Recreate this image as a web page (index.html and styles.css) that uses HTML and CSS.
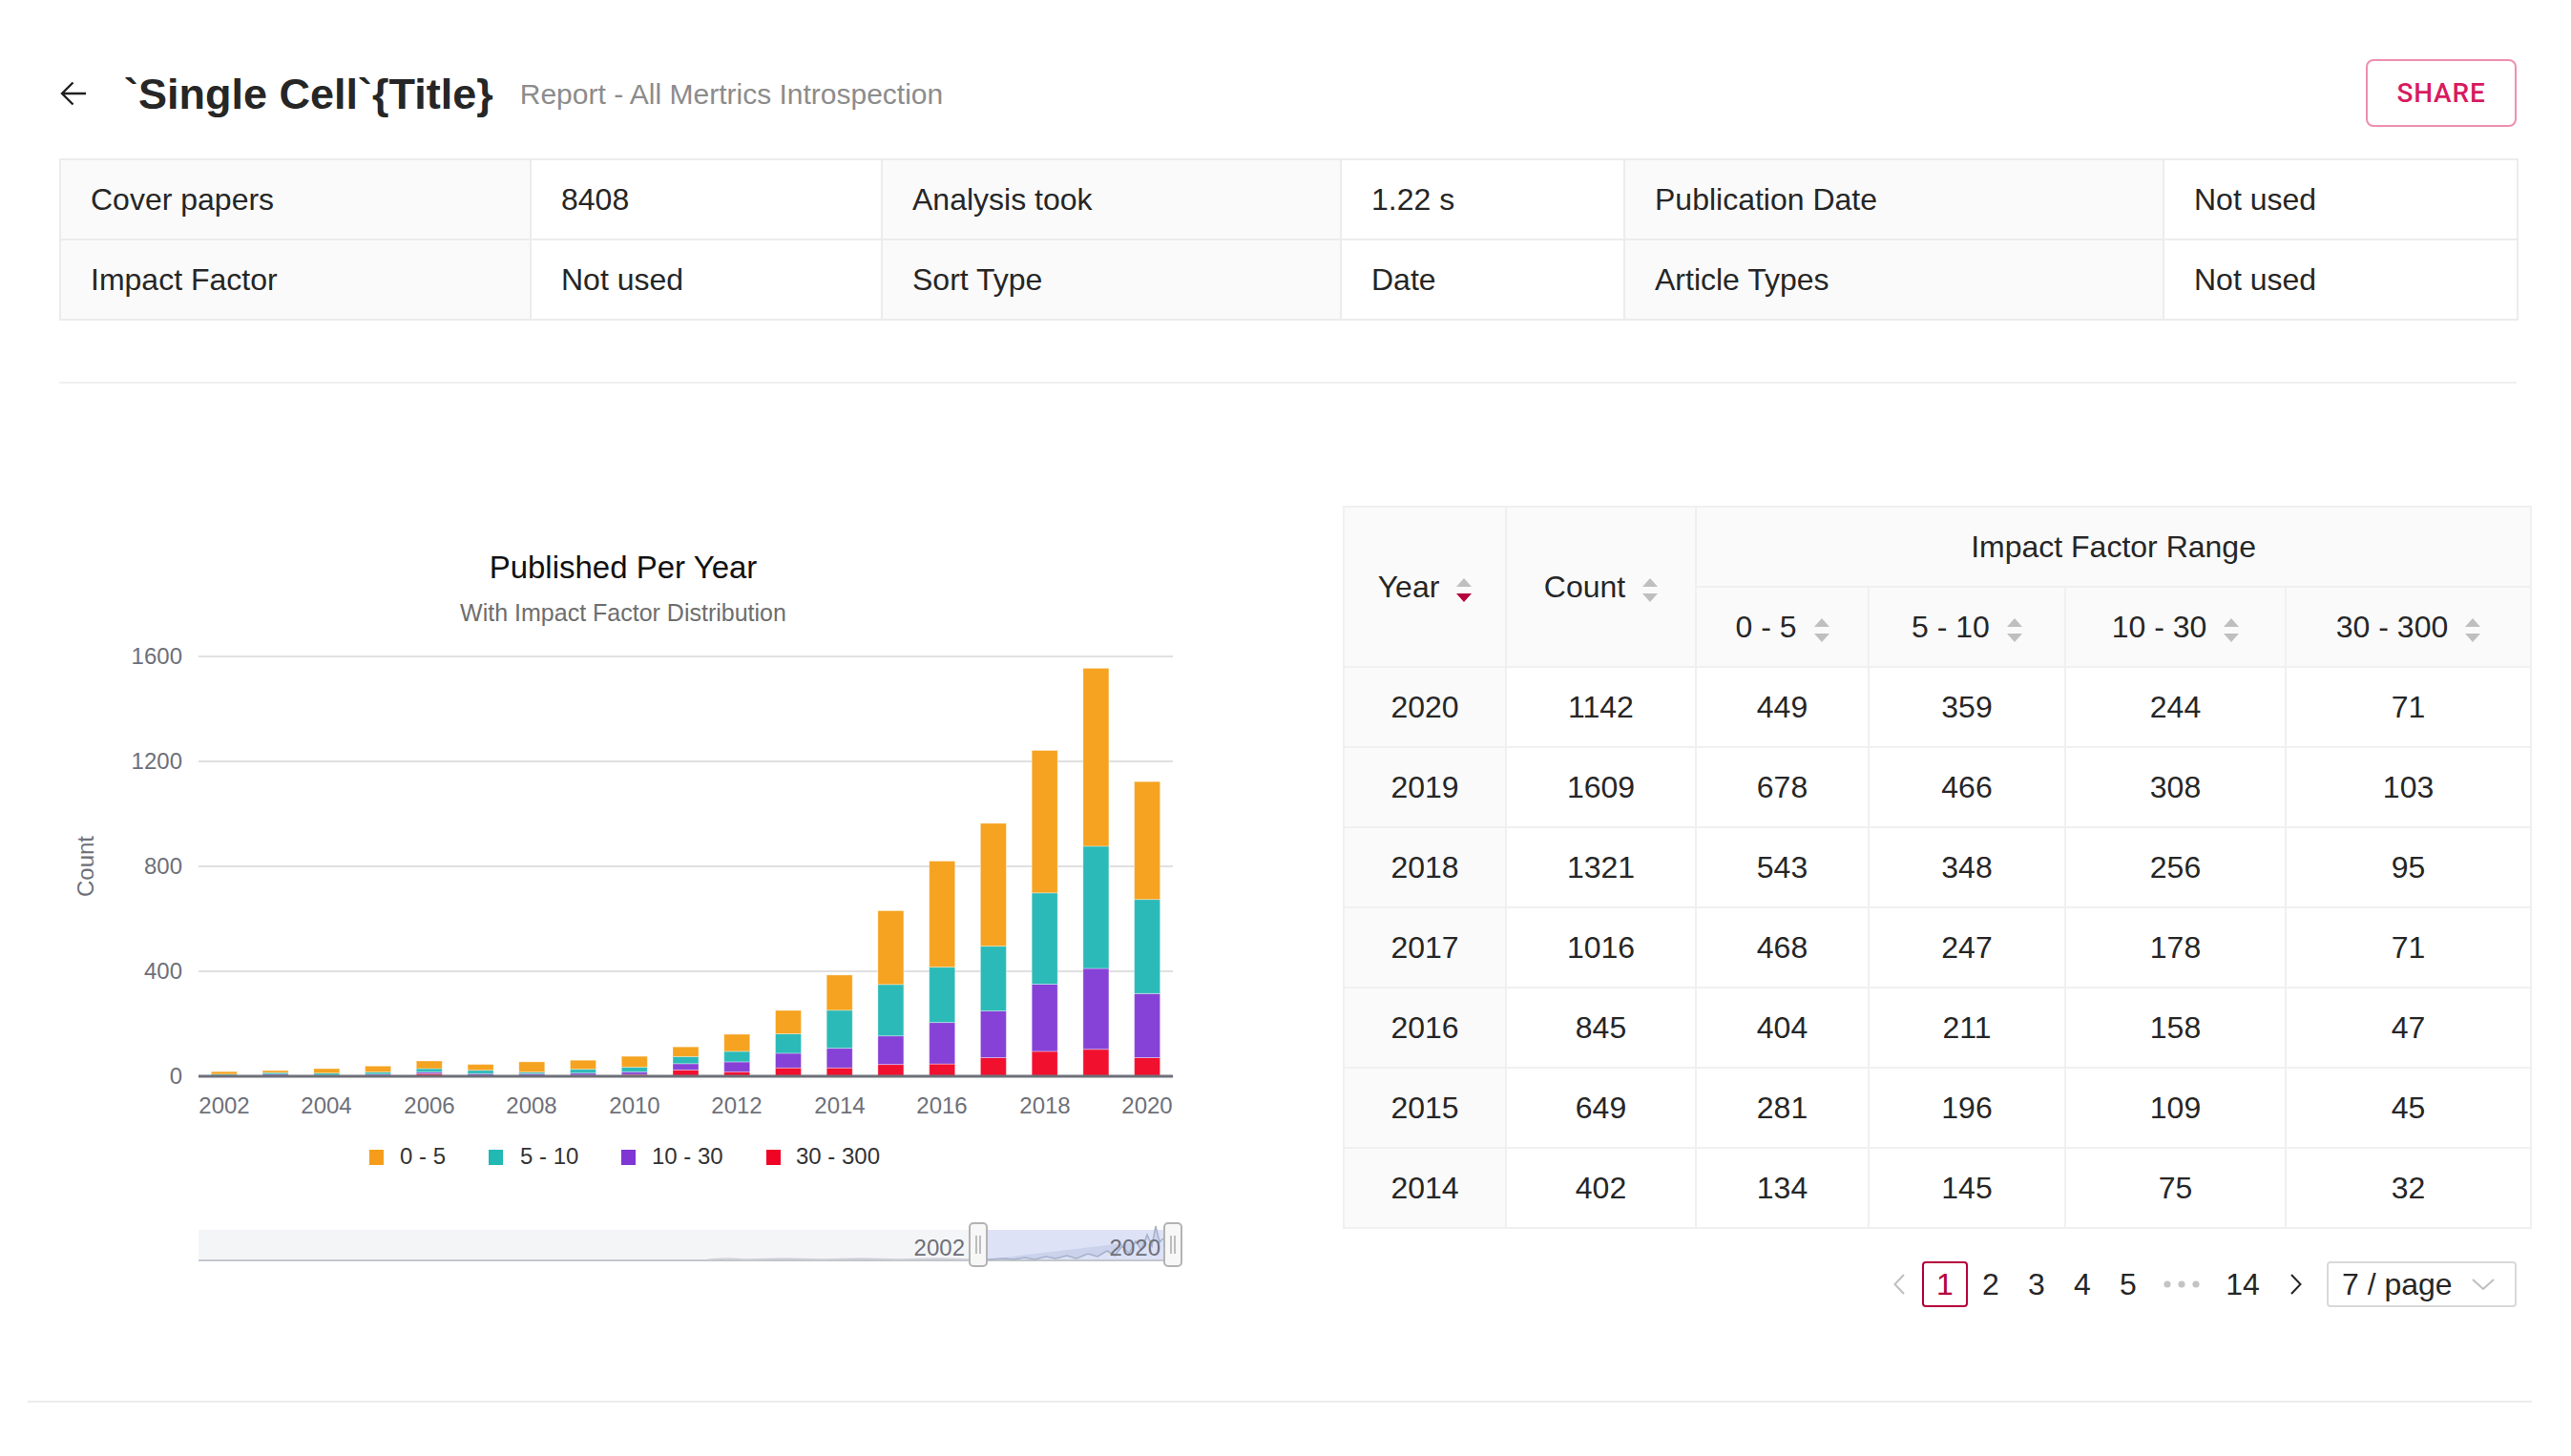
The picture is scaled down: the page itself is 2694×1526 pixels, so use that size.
FILE: index.html
```html
<!DOCTYPE html>
<html lang="en">
<head>
<meta charset="utf-8">
<title>Single Cell Report</title>
<link rel="stylesheet" href="styles.css">
</head>
<body>
<div class="page">
  <div class="top">
    <header class="header">
      <svg class="back" viewBox="0 0 28 26"><path d="M27 13H2M13.5 1.5L2 13L13.5 24.5" fill="none" stroke="#1f1f1f" stroke-width="2.4"/></svg>
      <h1 class="title">`Single Cell`{Title}</h1>
      <span class="subtitle">Report - All Mertrics Introspection</span>
      <button class="share">SHARE</button>
    </header>
    <table class="summary">
      <colgroup><col class="s1"><col class="s2"><col class="s3"><col class="s4"><col class="s5"><col class="s6"></colgroup>
      <tr><td class="lbl">Cover papers</td><td>8408</td><td class="lbl">Analysis took</td><td>1.22 s</td><td class="lbl">Publication Date</td><td>Not used</td></tr>
      <tr><td class="lbl">Impact Factor</td><td>Not used</td><td class="lbl">Sort Type</td><td>Date</td><td class="lbl">Article Types</td><td>Not used</td></tr>
    </table>
    <div class="divider"></div>
  </div>

  <div class="content">
    <div class="chart">
      <svg class="chart-svg" width="1300" height="810" viewBox="0 0 1300 810">
        <text class="c-title" x="591" y="76" text-anchor="middle">Published Per Year</text>
        <text class="c-sub" x="591" y="121" text-anchor="middle">With Impact Factor Distribution</text>
        <g class="grid">
          <line x1="146" y1="158" x2="1167" y2="158"/>
          <line x1="146" y1="268" x2="1167" y2="268"/>
          <line x1="146" y1="378" x2="1167" y2="378"/>
          <line x1="146" y1="488" x2="1167" y2="488"/>
        </g>
        <g class="ax">
          <text x="129" y="166" text-anchor="end">1600</text>
          <text x="129" y="276" text-anchor="end">1200</text>
          <text x="129" y="386" text-anchor="end">800</text>
          <text x="129" y="496" text-anchor="end">400</text>
          <text x="129" y="606" text-anchor="end">0</text>
        </g>
        <text class="ax" transform="translate(36,378) rotate(-90)" text-anchor="middle">Count</text>
        <g id="bars"></g>
        <line class="axis" x1="146" y1="598" x2="1167" y2="598"/>
        <g class="ax">
          <text x="173" y="637" text-anchor="middle">2002</text>
          <text x="280" y="637" text-anchor="middle">2004</text>
          <text x="388" y="637" text-anchor="middle">2006</text>
          <text x="495" y="637" text-anchor="middle">2008</text>
          <text x="603" y="637" text-anchor="middle">2010</text>
          <text x="710" y="637" text-anchor="middle">2012</text>
          <text x="818" y="637" text-anchor="middle">2014</text>
          <text x="925" y="637" text-anchor="middle">2016</text>
          <text x="1033" y="637" text-anchor="middle">2018</text>
          <text x="1140" y="637" text-anchor="middle">2020</text>
        </g>
        <g class="legend">
          <rect x="325" y="675" width="15" height="16" fill="#f59d1a"/>
          <text x="357" y="690">0 - 5</text>
          <rect x="450" y="675" width="15" height="16" fill="#22b8b4"/>
          <text x="483" y="690">5 - 10</text>
          <rect x="589" y="675" width="15" height="16" fill="#7f36d4"/>
          <text x="621" y="690">10 - 30</text>
          <rect x="741" y="675" width="15" height="16" fill="#ef0425"/>
          <text x="772" y="690">30 - 300</text>
        </g>
        <g class="zoom">
          <rect x="146" y="759" width="1011" height="33" fill="#f4f5f7"/>
          <rect x="973" y="759" width="184" height="33" fill="#dde2f7"/>
          <line x1="146" y1="791" x2="1157" y2="791" stroke="#c3c6cc" stroke-width="2"/>
          <polyline points="680,790 700,789 720,790 760,789 800,790 840,789 880,790 920,789 960,790" fill="none" stroke="#cfd2d8" stroke-width="1.5"/>
          <polyline points="973,790 990,789 1000,790 1012,788 1022,790 1034,787 1044,789 1056,786 1066,789 1078,784 1088,787 1098,781 1106,786 1114,776 1121,784 1128,771 1134,780 1140,764 1145,776 1149,755 1153,772 1157,768" fill="rgba(150,165,200,0.25)" stroke="#a7b2ca" stroke-width="1.5"/>
          <rect class="handle" x="954" y="752" width="18" height="45" rx="4"/>
          <line class="grip" x1="961" y1="765" x2="961" y2="784"/>
          <line class="grip" x1="965" y1="765" x2="965" y2="784"/>
          <rect class="handle" x="1158" y="752" width="18" height="45" rx="4"/>
          <line class="grip" x1="1165" y1="765" x2="1165" y2="784"/>
          <line class="grip" x1="1169" y1="765" x2="1169" y2="784"/>
          <text class="ax" x="949" y="786" text-anchor="end">2002</text>
          <text class="ax" x="1154" y="786" text-anchor="end">2020</text>
        </g>
      </svg>
    </div>

    <div class="right">
      <table class="data">
        <colgroup><col class="d1"><col class="d2"><col class="d3"><col class="d4"><col class="d5"><col class="d6"></colgroup>
        <thead>
          <tr>
            <th rowspan="2"><span class="th-in">Year<svg class="sorter" viewBox="0 0 16 25"><path class="up" d="M0 9L8 0L16 9Z"/><path class="dn on" d="M0 16H16L8 25Z"/></svg></span></th>
            <th rowspan="2"><span class="th-in">Count<svg class="sorter" viewBox="0 0 16 25"><path class="up" d="M0 9L8 0L16 9Z"/><path class="dn" d="M0 16H16L8 25Z"/></svg></span></th>
            <th colspan="4">Impact Factor Range</th>
          </tr>
          <tr>
            <th><span class="th-in">0 - 5<svg class="sorter" viewBox="0 0 16 25"><path class="up" d="M0 9L8 0L16 9Z"/><path class="dn" d="M0 16H16L8 25Z"/></svg></span></th>
            <th><span class="th-in">5 - 10<svg class="sorter" viewBox="0 0 16 25"><path class="up" d="M0 9L8 0L16 9Z"/><path class="dn" d="M0 16H16L8 25Z"/></svg></span></th>
            <th><span class="th-in">10 - 30<svg class="sorter" viewBox="0 0 16 25"><path class="up" d="M0 9L8 0L16 9Z"/><path class="dn" d="M0 16H16L8 25Z"/></svg></span></th>
            <th><span class="th-in">30 - 300<svg class="sorter" viewBox="0 0 16 25"><path class="up" d="M0 9L8 0L16 9Z"/><path class="dn" d="M0 16H16L8 25Z"/></svg></span></th>
          </tr>
        </thead>
        <tbody>
          <tr><td class="yr">2020</td><td>1142</td><td>449</td><td>359</td><td>244</td><td>71</td></tr>
          <tr><td class="yr">2019</td><td>1609</td><td>678</td><td>466</td><td>308</td><td>103</td></tr>
          <tr><td class="yr">2018</td><td>1321</td><td>543</td><td>348</td><td>256</td><td>95</td></tr>
          <tr><td class="yr">2017</td><td>1016</td><td>468</td><td>247</td><td>178</td><td>71</td></tr>
          <tr><td class="yr">2016</td><td>845</td><td>404</td><td>211</td><td>158</td><td>47</td></tr>
          <tr><td class="yr">2015</td><td>649</td><td>281</td><td>196</td><td>109</td><td>45</td></tr>
          <tr><td class="yr">2014</td><td>402</td><td>134</td><td>145</td><td>75</td><td>32</td></tr>
        </tbody>
      </table>
      <div class="pager">
        <span class="pg"><svg class="chev" viewBox="0 0 12 22"><path d="M11 1L1.5 11L11 21" fill="none" stroke="#bfbfbf" stroke-width="2"/></svg></span>
        <span class="pg active">1</span>
        <span class="pg">2</span>
        <span class="pg">3</span>
        <span class="pg">4</span>
        <span class="pg">5</span>
        <span class="pg ell"><svg class="dots" viewBox="0 0 38 8"><circle cx="4" cy="4" r="3.6"/><circle cx="19" cy="4" r="3.6"/><circle cx="34" cy="4" r="3.6"/></svg></span>
        <span class="pg wide">14</span>
        <span class="pg"><svg class="chev" viewBox="0 0 12 22"><path d="M1 1L10.5 11L1 21" fill="none" stroke="#262626" stroke-width="2"/></svg></span>
        <div class="select"><span>7 / page</span><svg class="down" viewBox="0 0 24 12"><path d="M1 1L12 11L23 1" fill="none" stroke="#bfbfbf" stroke-width="2"/></svg></div>
      </div>
    </div>
  </div>

  <div class="bottom-rule"></div>
</div>
<script src="script.js"></script>
</body>
</html>
```

FILE: styles.css
```css
html, body {
  margin: 0;
  padding: 0;
  background: #ffffff;
}
body {
  font-family: "Liberation Sans", Arial, Helvetica, sans-serif;
  color: #262626;
}
.page {
  width: 2694px;
}
.top {
  margin-left: 62px;
  width: 2575px;
}
.header {
  display: flex;
  align-items: center;
  height: 71px;
  margin-top: 62px;
}
.back {
  width: 28px;
  height: 26px;
  margin-left: 1px;
  flex: none;
}
.title {
  margin: 0 0 0 39px;
  font-size: 45px;
  font-weight: 700;
  color: #262626;
  line-height: 1.2;
  padding-top: 2px;
}
.subtitle {
  margin-left: 28px;
  font-size: 30px;
  color: #8c8c8c;
  line-height: 1.2;
  padding-top: 2px;
}
.share {
  margin-left: auto;
  width: 158px;
  height: 71px;
  border: 2px solid #ee8fb1;
  border-radius: 8px;
  background: #ffffff;
  color: #d81b60;
  font-family: Roboto, "Liberation Sans", sans-serif;
  font-weight: 500;
  font-size: 28px;
  letter-spacing: 0.8px;
  padding: 0;
}

.summary {
  margin-top: 33px;
  width: 2575px;
  table-layout: fixed;
  border-collapse: separate;
  border-spacing: 0;
  border-top: 2px solid #ececec;
  border-left: 2px solid #ececec;
}
.summary tr { height: 84px; }
.summary td {
  border-right: 2px solid #ececec;
  border-bottom: 2px solid #ececec;
  padding: 0 0 0 31px;
  font-size: 32px;
  color: #262626;
  background: #ffffff;
}
.summary td.lbl { background: #fafafa; }
.s1 { width: 493px; }
.s2 { width: 368px; }
.s3 { width: 481px; }
.s4 { width: 297px; }
.s5 { width: 565px; }
.s6 { width: 371px; }

.divider {
  margin-top: 64px;
  height: 2px;
  background: #f0f0f0;
}

.content {
  display: flex;
  align-items: flex-start;
  margin-top: 128px;
  margin-left: 62px;
}
.chart {
  width: 1300px;
  height: 810px;
  flex: none;
}
.chart-svg { display: block; }
.c-title {
  font-family: "Liberation Sans", Arial, sans-serif;
  font-size: 33px;
  fill: #111111;
}
.c-sub {
  font-family: "Liberation Sans", Arial, sans-serif;
  font-size: 25px;
  fill: #6e6e6e;
}
.grid line {
  stroke: #e0e0e0;
  stroke-width: 2;
}
.axis {
  stroke: #6e7079;
  stroke-width: 3;
}
.ax, .ax text {
  font-family: "Liberation Sans", Arial, sans-serif;
  font-size: 24px;
  fill: #6e7079;
}
.legend text {
  font-family: "Liberation Sans", Arial, sans-serif;
  font-size: 24px;
  fill: #333333;
}
.handle {
  fill: #f7f7f7;
  stroke: #b3b3b3;
  stroke-width: 2;
}
.grip {
  stroke: #aaaaaa;
  stroke-width: 1.5;
}

.right {
  margin-left: 45px;
  width: 1246px;
  flex: none;
}
.data {
  width: 1246px;
  table-layout: fixed;
  border-collapse: separate;
  border-spacing: 0;
  border-top: 2px solid #f0f0f0;
  border-left: 2px solid #f0f0f0;
}
.data tr { height: 84px; }
.data th, .data td {
  border-right: 2px solid #f0f0f0;
  border-bottom: 2px solid #f0f0f0;
  padding: 0;
  text-align: center;
  font-size: 32px;
  font-weight: 400;
  color: #262626;
}
.data th { background: #fafafa; }
.data td { background: #ffffff; }
.data td.yr { background: #fafafa; }
.d1 { width: 170px; }
.d2 { width: 199px; }
.d3 { width: 181px; }
.d4 { width: 206px; }
.d5 { width: 231px; }
.d6 { width: 257px; }
.th-in {
  display: inline-flex;
  align-items: center;
  gap: 18px;
}
.sorter {
  width: 16px;
  height: 25px;
  margin-top: 6px;
}
.sorter path { fill: #bfbfbf; }
.sorter path.on { fill: #b5003d; }

.pager {
  display: flex;
  align-items: center;
  justify-content: flex-end;
  margin-top: 34px;
  margin-right: 16px;
  height: 48px;
}
.pg {
  width: 48px;
  height: 48px;
  box-sizing: border-box;
  display: flex;
  align-items: center;
  justify-content: center;
  font-size: 32px;
  color: #262626;
}
.pg.active {
  border: 2px solid #b5003d;
  border-radius: 4px;
  color: #b5003d;
}
.pg.ell, .pg.wide { width: 64px; }
.chev { width: 12px; height: 22px; }
.dots { width: 38px; height: 8px; }
.dots circle { fill: #c4c4c4; }
.select {
  margin-left: 8px;
  width: 199px;
  height: 48px;
  box-sizing: border-box;
  border: 2px solid #d9d9d9;
  border-radius: 4px;
  display: flex;
  align-items: center;
  justify-content: space-between;
  padding: 0 21px 0 14px;
  font-size: 32px;
  color: #262626;
}
.down { width: 24px; height: 12px; }

.bottom-rule {
  margin: 98px 0 0 29px;
  width: 2624px;
  height: 2px;
  background: #ececec;
}
```

FILE: script.js
```js
(function () {
  var NS = 'http://www.w3.org/2000/svg';
  var g = document.getElementById('bars');
  if (!g) return;
  // stacked: [30-300, 10-30, 5-10, 0-5] for years 2002..2020
  var data = [
    [1, 2, 5, 10], [2, 6, 6, 8], [1, 3, 8, 17], [3, 5, 8, 23], [10, 6, 13, 29],
    [3, 7, 13, 22], [3, 7, 6, 39], [4, 8, 15, 34], [7, 10, 18, 41], [24, 24, 27, 37],
    [17, 38, 40, 65], [32, 56, 74, 89], [32, 75, 145, 134], [45, 109, 196, 281],
    [47, 158, 211, 404], [71, 178, 247, 468], [95, 256, 348, 543], [103, 308, 466, 678],
    [71, 244, 359, 449]
  ];
  var colors = ['#f2102f', '#8642d6', '#2bbab8', '#f5a320'];
  var band = 1021 / 19;
  for (var i = 0; i < data.length; i++) {
    var cx = 146 + band * (i + 0.5);
    var y = 598;
    for (var k = 0; k < 4; k++) {
      var h = data[i][k] * 0.275;
      y -= h;
      var r = document.createElementNS(NS, 'rect');
      r.setAttribute('x', (cx - 13.5).toFixed(1));
      r.setAttribute('y', y.toFixed(1));
      r.setAttribute('width', '27');
      r.setAttribute('height', h.toFixed(1));
      r.setAttribute('fill', colors[k]);
      r.setAttribute('stroke', 'rgba(255,255,255,0.35)');
      r.setAttribute('stroke-width', '1');
      g.appendChild(r);
    }
  }
})();
```
